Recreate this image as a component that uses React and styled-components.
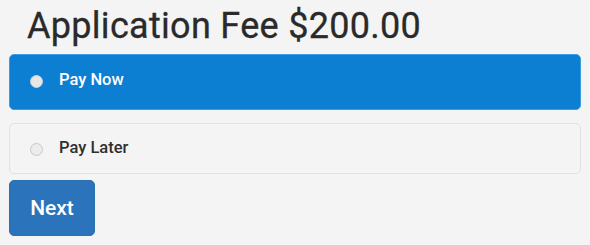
import styled, { createGlobalStyle } from "styled-components";

const GlobalStyle = createGlobalStyle`
    body {
        margin: 0;
        background: #f4f4f4;
        font-family: Roboto, "Liberation Sans", sans-serif;
    }
`;

const options = [
    { id: "now", label: "Pay Now" },
    { id: "later", label: "Pay Later" },
];

const App = () => {
    const selected = "now";
    return <Page>
        <GlobalStyle/>
        <Title>Application Fee $200.00</Title>
        <Options>
            {options.map((o) => (
                <Option key={o.id} $active={o.id === selected}>
                    <Radio $active={o.id === selected}/>
                    <Label>{o.label}</Label>
                </Option>
            ))}
        </Options>
        <NextButton>Next</NextButton>
    </Page>;
};

const Page = styled.div`
    width: 590px;
    height: 245px;
    box-sizing: border-box;
    padding: 0 9px;
    display: flex;
    flex-direction: column;
`;

const Title = styled.h1`
    margin: 4px 0 0 18px;
    font-size: 36px;
    font-weight: 400;
    letter-spacing: 0.3px;
    color: #2a2a2a;
    line-height: 44px;
    height: 50px;
    -webkit-text-stroke: 0.3px #2a2a2a;
`;

const Options = styled.div`
    display: flex;
    flex-direction: column;
    gap: 13px;
`;

const Option = styled.div`
    height: ${(p) => (p.$active ? "56px" : "51px")};
    box-sizing: border-box;
    display: flex;
    align-items: center;
    padding: 0 0 ${(p) => (p.$active ? "5px" : "2px")} 20px;
    border-radius: 5px;
    background: ${(p) => (p.$active ? "#0d7fd3" : "#f4f4f4")};
    border: 1px solid ${(p) => (p.$active ? "#3e9ae0" : "#e2e2e2")};
    color: ${(p) => (p.$active ? "#ffffff" : "#2f2f2f")};
`;

const Radio = styled.span`
    width: 13px;
    height: 13px;
    border-radius: 50%;
    box-sizing: border-box;
    background: ${(p) => (p.$active ? "#e6e6e6" : "#ececec")};
    border: 1px solid ${(p) => (p.$active ? "#d0d0d0" : "#c9c9c9")};
    margin-top: 3px;
`;

const Label = styled.span`
    margin-left: 16px;
    font-size: 16.5px;
    font-weight: 500;
`;

const NextButton = styled.button`
    margin-top: 6px;
    width: 86px;
    height: 56px;
    border: 1px solid #2a6fae;
    border-radius: 5px;
    background: #2b73bb;
    color: #ffffff;
    font-family: Roboto, "Liberation Sans", sans-serif;
    font-size: 21px;
    font-weight: 500;
    padding: 0;
`;

export default App;
